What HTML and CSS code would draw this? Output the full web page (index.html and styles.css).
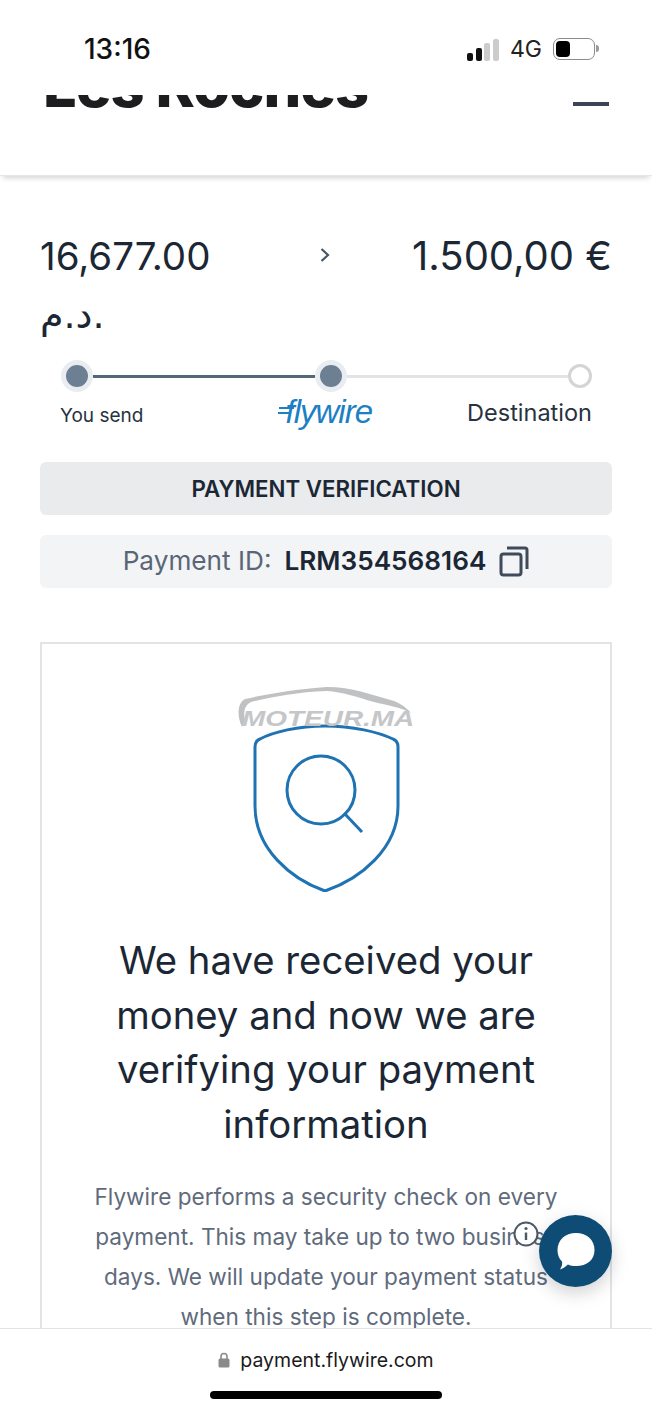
FILE: index.html
```html
<!DOCTYPE html>
<html lang="en">
<head>
<meta charset="utf-8">
<title>Flywire payment</title>
<link rel="stylesheet" href="styles.css">
</head>
<body>
<div class="phone">
  <div class="status">
    <span class="clock">13:16</span>
    <div class="status-right">
      <div class="signal"><i class="b1"></i><i class="b2"></i><i class="b3"></i><i class="b4"></i></div>
      <span class="net">4G</span>
      <div class="battery"><i></i></div>
    </div>
  </div>

  <header class="header">
    <div class="brand-clip"><h1 class="brand">Les Roches</h1></div>
    <span class="menu-dash"></span>
  </header>

  <main class="main">
    <div class="amounts">
      <div class="amount-left">16,677.00 <span class="mad" dir="rtl">.د.م</span></div>
      <svg class="chev" width="10" height="16" viewBox="0 0 10 16"><path d="M1.500 2 L8 8 L1.500 14" fill="none" stroke="#46566a" stroke-width="2.200"/></svg>
      <div class="amount-right">1.500,00 €</div>
    </div>

    <div class="stepper">
      <span class="dot"></span><span class="line done"></span><span class="dot"></span><span class="line"></span><span class="dot empty"></span>
    </div>
    <div class="step-labels">
      <span class="lbl-send">You send</span>
      <span class="logo"><svg class="logo-bars" width="16" height="14" viewBox="0 0 16 14"><path d="M1 2H16M0 7H13" stroke="#1d7fc4" stroke-width="2.200"/></svg><span class="logo-text">flywire</span></span>
      <span class="lbl-dest">Destination</span>
    </div>

    <div class="bar bar-title">PAYMENT VERIFICATION</div>
    <div class="bar bar-id">
      <span class="id-label">Payment ID:</span>
      <strong class="id-value">LRM354568164</strong>
      <svg class="copy" width="30" height="31" viewBox="0 0 30 31"><rect x="2" y="8" width="20" height="21" rx="2.500" fill="none" stroke="#3f4b5b" stroke-width="3"/><path d="M8 2H26Q28 2 28 4V23" fill="none" stroke="#3f4b5b" stroke-width="3"/></svg>
    </div>

    <section class="card">
      <svg class="shield" width="147" height="168" viewBox="0 0 147 168">
        <path d="M72 2C100 2 125 8 140 15Q145 17 145 23V82C145 125 107 155 72 167C38 155 2 125 2 82V23Q2 17 7 15C20 8 45 2 72 2Z" fill="none" stroke="#1f73b2" stroke-width="3"/>
        <circle cx="68" cy="66" r="34" fill="none" stroke="#1f73b2" stroke-width="3"/>
        <path d="M91 89L109 108" stroke="#1f73b2" stroke-width="3"/>
      </svg>
      <h2 class="card-title">We have received your money and now we are verifying your payment information</h2>
      <p class="card-text">Flywire performs a security check on every payment. This may take up to two business days. We will update your payment status when this step is complete.</p>
    </section>
  </main>

  <div class="watermark">
    <svg width="178" height="44" viewBox="0 0 178 44"><path d="M5 40C0 30 0 16 8 12C30 7 60 2 90 0C115 0 135 8 150 12C160 14 168 19 174 26C165 21 150 18 137 15C120 10 105 5 90 4C60 5 35 10 14 15C8 18 6 24 8 34Z" fill="#bfc1c3"/></svg>
    <span class="wm-text">MOTEUR.MA</span>
  </div>

  <svg class="info" width="26" height="26" viewBox="0 0 26 26"><circle cx="13" cy="13" r="11.500" fill="#fff" stroke="#4e5968" stroke-width="2"/><path d="M13 11.500V19" stroke="#4e5968" stroke-width="2.400"/><circle cx="13" cy="7.500" r="1.600" fill="#4e5968"/></svg>
  <div class="chat">
    <svg width="40" height="40" viewBox="0 0 40 40"><path d="M20 2C31 2 38.500 9 38.500 19C38.500 29 31 35 20 35C17 35 14 34.500 12 33.500C9 36 6.500 38 4 38.500C6 35 6.500 33 6 30.500C3 27.500 1.500 24 1.500 19C1.500 9 9 2 20 2Z" fill="#fff"/></svg>
  </div>

  <footer class="browser">
    <div class="url">
      <svg width="12" height="16" viewBox="0 0 12 16"><path d="M3 7V4.500a3 3 0 0 1 6 0V7" fill="none" stroke="#8a8a8a" stroke-width="1.600"/><rect x="0.500" y="6.500" width="11" height="9" rx="1.500" fill="#8a8a8a"/></svg>
      <span>payment.flywire.com</span>
    </div>
    <div class="home"></div>
  </footer>
</div>
</body>
</html>
```
FILE: styles.css
```css
* { box-sizing: border-box; }
html, body { margin: 0; padding: 0; background: #fff; }
body { font-family: Inter, "DejaVu Sans", sans-serif; color: #1c2837; }

.phone {
  position: relative;
  width: 652px;
  height: 1414px;
  overflow: hidden;
  background: #fff;
}

/* status bar */
.status {
  height: 95px;
  padding: 32px 57px 0 84px;
  display: flex;
  justify-content: space-between;
  align-items: flex-start;
}
.clock { font-size: 28px; line-height: 34px; font-weight: 500; color: #111; }
.status-right { display: flex; align-items: center; gap: 11px; height: 34px; }
.signal { display: flex; align-items: flex-end; gap: 2.500px; height: 22px; margin-bottom: -2px; }
.signal i { display: block; width: 6px; border-radius: 2px; background: #111; }
.signal .b1 { height: 8px; }
.signal .b2 { height: 13px; }
.signal .b3 { height: 18px; background: #ccc; }
.signal .b4 { height: 22px; background: #ccc; }
.net { font-size: 23px; line-height: 30px; color: #222; }
.battery {
  position: relative;
  width: 42px;
  height: 22px;
  border: 1.500px solid #8b8b8b;
  border-radius: 7px;
  padding: 2px;
}
.battery i { display: block; width: 14px; height: 100%; background: #000; border-radius: 4px; }
.battery::after {
  content: "";
  position: absolute;
  right: -5px;
  top: 6px;
  width: 3px;
  height: 7px;
  background: #999;
  border-radius: 0 3px 3px 0;
}

/* site header */
.header {
  height: 81px;
  padding: 0 43px;
  display: flex;
  justify-content: space-between;
  align-items: flex-start;
  box-shadow: 0 5px 5px -3px rgba(60, 60, 60, 0.22);
  border-bottom: 1px solid #e6e6e6;
}
.brand-clip { height: 18px; overflow: hidden; }
.brand {
  margin: -20px 0 0;
  font-size: 59.500px;
  line-height: 20px;
  font-weight: 800;
  color: #1d1d1f;
  white-space: nowrap;
  letter-spacing: -1px;
}
.menu-dash { width: 36px; height: 3.500px; margin: 7px 0 0; background: #3a4452; }

/* main */
.main { padding: 0 40px; }
.amounts {
  margin-top: 51px;
  display: flex;
  justify-content: space-between;
  align-items: flex-start;
}
.amount-left, .amount-right {
  line-height: 58px;
  font-weight: 400;
  color: #1b2734;
}
.amount-left { width: 180px; font-size: 38.500px; }
.amount-right { font-size: 40px; }
.mad { display: inline-block; font-family: "DejaVu Sans", sans-serif; font-size: 38px; line-height: 58px; }
.chev { margin-top: 20px; margin-left: 18px; }

.stepper {
  margin: 16px 0 0 21px;
  width: 531px;
  display: flex;
  align-items: center;
}
.dot {
  flex: none;
  width: 32px;
  height: 32px;
  border-radius: 50%;
  background: #6c7f93;
  border: 5px solid #e9edf1;
}
.dot.empty {
  width: 24px;
  height: 24px;
  background: #fff;
  border: 3px solid #d4d4d4;
}
.line { flex: 1; height: 3px; background: #e3e3e3; }
.line.done { background: #55677c; }

.step-labels {
  height: 70px;
  padding: 0 20px 30px;
  display: flex;
  justify-content: space-between;
  align-items: center;
}
.lbl-send { font-size: 19px; color: #27323f; margin-top: 6px; }
.logo { display: flex; align-items: center; margin-left: 40px; color: #1d7fc4; }
.logo-bars { margin-right: -9px; margin-top: 1px; }
.logo-text {
  font-family: "Liberation Sans", sans-serif;
  font-style: italic;
  font-size: 33px;
  line-height: 36px;
  letter-spacing: -1px;
}
.lbl-dest { font-size: 23.500px; color: #27323f; }

.bar {
  height: 53px;
  border-radius: 6px;
  display: flex;
  align-items: center;
  justify-content: center;
}
.bar-title {
  background: #e9ebed;
  font-size: 22.300px;
  font-weight: 600;
  color: #1b2734;
}
.bar-id {
  margin-top: 20px;
  background: #f3f4f6;
  font-size: 26.200px;
  padding-bottom: 2px;
}
.id-label { color: #5a6675; }
.id-value { margin-left: 13px; font-weight: 600; color: #1b2734; }
.copy { margin-left: 13px; margin-top: 1px; }

.card {
  margin-top: 54px;
  height: 760px;
  padding: 80px 20px 0;
  border: 2px solid #e3e4e6;
  display: flex;
  flex-direction: column;
  align-items: center;
}
.shield { flex: none; }
.card-title {
  margin: 41px 0 0;
  width: 480px;
  font-size: 38.300px;
  line-height: 54.500px;
  font-weight: 400;
  text-align: center;
  color: #1b2734;
}
.card-text {
  margin: 26px 0 0;
  width: 480px;
  font-size: 22.600px;
  line-height: 40px;
  text-align: center;
  color: #5f6b7c;
}

/* overlays */
.watermark { position: absolute; left: 237px; top: 687px; width: 178px; height: 44px; }
.watermark svg { display: block; }
.wm-text {
  position: absolute;
  left: 5px;
  top: 19px;
  font-family: "Liberation Sans", sans-serif;
  font-weight: 700;
  font-style: italic;
  font-size: 22px;
  line-height: 26px;
  color: #c4c6c8;
  white-space: nowrap;
  transform: scaleX(1.27);
  transform-origin: left center;
}
.info { position: absolute; left: 513px; top: 1221px; }
.chat {
  position: absolute;
  left: 539px;
  top: 1215px;
  width: 73px;
  height: 72px;
  border-radius: 50%;
  background: #0f4c75;
  box-shadow: 0 6px 18px rgba(0, 0, 0, 0.18);
  display: flex;
  align-items: center;
  justify-content: center;
}

.browser {
  position: absolute;
  left: 0;
  right: 0;
  bottom: 0;
  height: 86px;
  background: #fff;
  border-top: 1px solid #e3e3e3;
  display: flex;
  flex-direction: column;
  align-items: center;
}
.url {
  margin-top: 18px;
  display: flex;
  align-items: center;
  gap: 10px;
  font-size: 19.500px;
  line-height: 26px;
  color: #1a1a1a;
}
.home {
  margin-top: 18px;
  width: 232px;
  height: 8px;
  border-radius: 4px;
  background: #000;
}
```
